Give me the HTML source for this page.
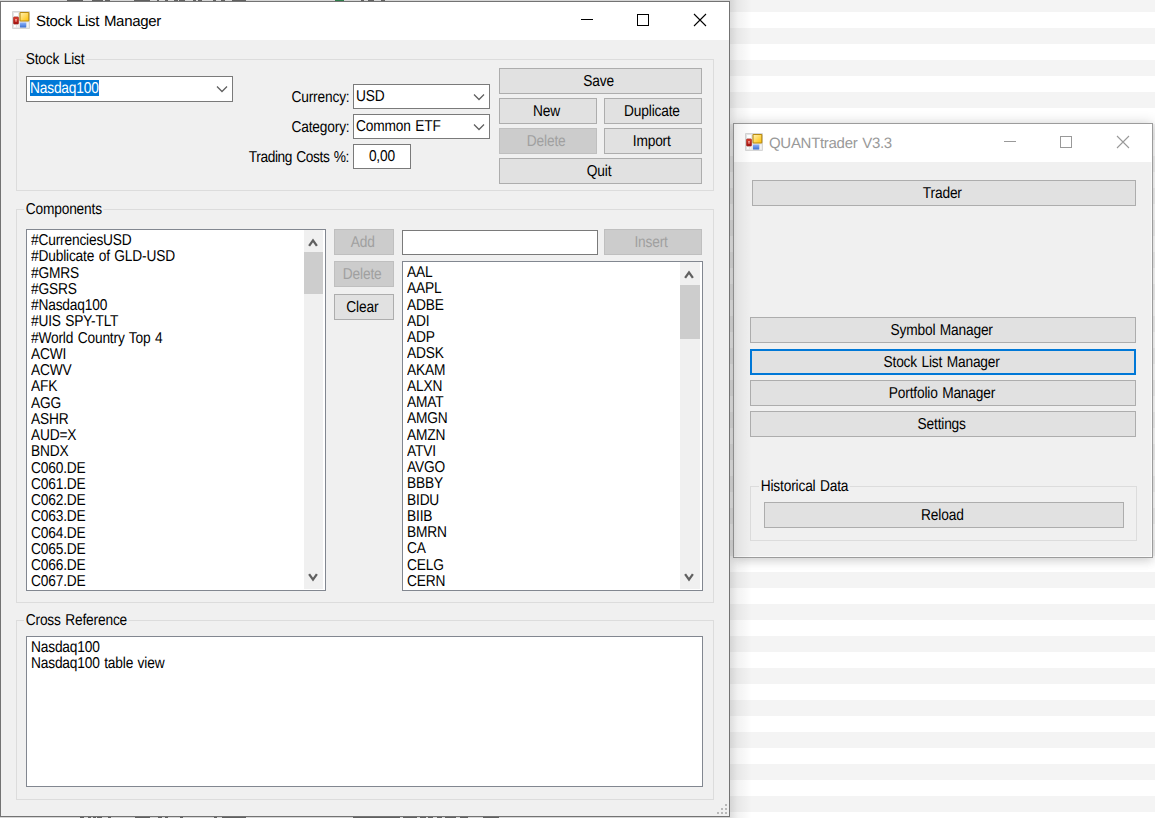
<!DOCTYPE html>
<html><head><meta charset="utf-8">
<style>
html,body{margin:0;padding:0;}
body{width:1155px;height:818px;position:relative;overflow:hidden;
 background:repeating-linear-gradient(to bottom,#f4f4f4 0px,#f4f4f4 12px,#ffffff 12px,#ffffff 28px,#f4f4f4 28px,#f4f4f4 32px);
 font-family:"Liberation Sans",sans-serif;font-size:15.75px;letter-spacing:-0.2px;word-spacing:1px;color:#000;text-rendering:geometricPrecision;}
.a{position:absolute;box-sizing:border-box;}
.t{position:absolute;white-space:pre;line-height:16px;}
.s{display:inline-block;transform:scaleX(0.872);position:relative;top:1px;}
.btn{position:absolute;box-sizing:border-box;background:#e1e1e1;border:1px solid #adadad;text-align:center;line-height:24px;white-space:pre;padding-right:3px;}
.btn .s{transform-origin:50% 50%;}
.dis{background:#cccccc;border-color:#bfbfbf;color:#a0a0a0;}
.foc{border:2px solid #0078d7;line-height:22px;}
.grp{position:absolute;box-sizing:border-box;border:1px solid #dcdcdc;}
.lbl{background:#f0f0f0;padding:0 2px 0 2px;}
.box{position:absolute;box-sizing:border-box;background:#fff;border:1px solid #7a7a7a;}
.lb{position:absolute;box-sizing:border-box;background:#fff;border:1px solid #828790;overflow:hidden;}
.sb{position:absolute;background:#f0f0f0;}
.thumb{position:absolute;background:#cdcdcd;}
</style></head><body>
<div class="a" style="left:733px;top:123px;width:420px;height:435px;border:1px solid #9c9c9c;background:#f0f0f0;box-shadow:0 0 12px rgba(0,0,0,0.16),0 4px 9px rgba(0,0,0,0.08),inset -1px -1px 0 #fafafa;"></div>
<div class="a" style="left:734px;top:124px;width:418px;height:38px;background:#fff;"></div>
<svg class="a" style="left:745px;top:133px" width="18" height="18" viewBox="0 0 18 18">
<defs><linearGradient id="gyq" x1="0" y1="0" x2="1" y2="1"><stop offset="0" stop-color="#fff2b8"/><stop offset="1" stop-color="#ffc000"/></linearGradient>
<linearGradient id="grq" x1="0" y1="0" x2="0" y2="1"><stop offset="0" stop-color="#e04030"/><stop offset="1" stop-color="#a01010"/></linearGradient>
<linearGradient id="gbq" x1="0" y1="0" x2="0" y2="1"><stop offset="0" stop-color="#8fb4ff"/><stop offset="1" stop-color="#3a6fd0"/></linearGradient></defs>
<rect x="0" y="0" width="18" height="18" rx="1" fill="#d6d6d6"/>
<rect x="1" y="1" width="16" height="16" fill="#e6e6e6"/>
<rect x="2" y="2" width="4" height="3" fill="#fff"/>
<rect x="1.5" y="6" width="5" height="7" rx="0.8" fill="url(#grq)" stroke="#a52015" stroke-width="0.6"/>
<path d="M3 8 L5 8 L4.3 11 L3.7 11 Z" fill="#f2a8a0"/>
<rect x="8" y="1.5" width="8.8" height="8.5" rx="0.6" fill="url(#gyq)" stroke="#b88a10" stroke-width="1.1"/>
<rect x="8" y="11.5" width="6.2" height="5" rx="0.5" fill="url(#gbq)"/>
<rect x="2" y="14" width="1.8" height="2.2" fill="#fff"/><rect x="5" y="14" width="1.4" height="2.2" fill="#f6f6f6"/><rect x="15" y="11.5" width="1.5" height="4.8" fill="#f4f4f4"/>
</svg>
<div class="a" style="left:769px;top:133.5px;font-size:15px;letter-spacing:-0.3px;line-height:20px;color:#999;white-space:pre">QUANTtrader V3.3</div>
<div class="a" style="left:1004px;top:141px;width:12px;height:1px;background:#999"></div>
<div class="a" style="left:1060px;top:136px;width:12px;height:12px;border:1px solid #999"></div>
<svg class="a" style="left:1116px;top:135px" width="14" height="14" viewBox="0 0 14 14"><path d="M1 1 L13 13 M13 1 L1 13" stroke="#999" stroke-width="1.1"/></svg>
<div class="btn " style="left:752px;top:180px;width:384px;height:26px;"><span class="s">Trader</span></div>
<div class="btn " style="left:750px;top:317px;width:386px;height:26px;"><span class="s">Symbol Manager</span></div>
<div class="btn foc" style="left:750px;top:349px;width:386px;height:26px;"><span class="s">Stock List Manager</span></div>
<div class="btn " style="left:750px;top:380px;width:386px;height:26px;"><span class="s">Portfolio Manager</span></div>
<div class="btn " style="left:750px;top:411px;width:386px;height:26px;"><span class="s">Settings</span></div>
<div class="grp" style="left:750px;top:486px;width:387px;height:55px;"></div>
<div class="t" style="left:759px;top:478px;"><span class="s lbl" style="transform-origin:0 0">Historical Data</span></div>
<div class="btn " style="left:764px;top:502px;width:360px;height:26px;"><span class="s">Reload</span></div>
<div class="a" style="left:730px;top:0;width:22px;height:818px;background:linear-gradient(to right,rgba(0,0,0,0.13),rgba(0,0,0,0.05) 35%,rgba(0,0,0,0) 100%);"></div>
<div class="a" style="left:0;top:1px;width:730px;height:816px;border:1px solid #737373;background:#f0f0f0;"></div>
<div class="a" style="left:1px;top:2px;width:728px;height:38px;background:#fff;"></div>
<svg class="a" style="left:12px;top:11px" width="18" height="18" viewBox="0 0 18 18">
<defs><linearGradient id="gym" x1="0" y1="0" x2="1" y2="1"><stop offset="0" stop-color="#fff2b8"/><stop offset="1" stop-color="#ffc000"/></linearGradient>
<linearGradient id="grm" x1="0" y1="0" x2="0" y2="1"><stop offset="0" stop-color="#e04030"/><stop offset="1" stop-color="#a01010"/></linearGradient>
<linearGradient id="gbm" x1="0" y1="0" x2="0" y2="1"><stop offset="0" stop-color="#8fb4ff"/><stop offset="1" stop-color="#3a6fd0"/></linearGradient></defs>
<rect x="0" y="0" width="18" height="18" rx="1" fill="#d6d6d6"/>
<rect x="1" y="1" width="16" height="16" fill="#e6e6e6"/>
<rect x="2" y="2" width="4" height="3" fill="#fff"/>
<rect x="1.5" y="6" width="5" height="7" rx="0.8" fill="url(#grm)" stroke="#a52015" stroke-width="0.6"/>
<path d="M3 8 L5 8 L4.3 11 L3.7 11 Z" fill="#f2a8a0"/>
<rect x="8" y="1.5" width="8.8" height="8.5" rx="0.6" fill="url(#gym)" stroke="#b88a10" stroke-width="1.1"/>
<rect x="8" y="11.5" width="6.2" height="5" rx="0.5" fill="url(#gbm)"/>
<rect x="2" y="14" width="1.8" height="2.2" fill="#fff"/><rect x="5" y="14" width="1.4" height="2.2" fill="#f6f6f6"/><rect x="15" y="11.5" width="1.5" height="4.8" fill="#f4f4f4"/>
</svg>
<div class="a" style="left:36px;top:12px;font-size:15px;letter-spacing:-0.3px;line-height:20px;white-space:pre">Stock List Manager</div>
<div class="a" style="left:581px;top:19px;width:12px;height:1px;background:#000"></div>
<div class="a" style="left:637px;top:14px;width:12px;height:12px;border:1px solid #000"></div>
<svg class="a" style="left:693px;top:13px" width="14" height="14" viewBox="0 0 14 14"><path d="M1 1 L13 13 M13 1 L1 13" stroke="#000" stroke-width="1.1"/></svg>
<div class="grp" style="left:16px;top:59px;width:698px;height:132px;"></div>
<div class="t" style="left:24px;top:51px;"><span class="s lbl" style="transform-origin:0 0">Stock List</span></div>
<div class="box" style="left:26px;top:76px;width:207px;height:26px;"></div>
<div class="a" style="left:30px;top:80px;width:69px;height:16px;background:#0078d7;"></div>
<div class="t" style="left:30px;top:80px;text-align:left;color:#fff"><span class="s" style="transform-origin:0 0">Nasdaq100</span></div>
<svg class="a" style="left:216px;top:85px" width="12" height="8" viewBox="0 0 12 8"><path d="M1 1.5 L6 6.5 L11 1.5" fill="none" stroke="#606060" stroke-width="1.3"/></svg>
<div class="t" style="left:200px;top:89px;width:149px;text-align:right;"><span class="s" style="transform-origin:100% 0">Currency:</span></div>
<div class="t" style="left:200px;top:119px;width:149px;text-align:right;"><span class="s" style="transform-origin:100% 0">Category:</span></div>
<div class="t" style="left:200px;top:149px;width:149px;text-align:right;letter-spacing:-0.45px"><span class="s" style="transform-origin:100% 0">Trading Costs %:</span></div>
<div class="box" style="left:353px;top:84px;width:137px;height:25px;"></div>
<div class="t" style="left:356px;top:88px;text-align:left;"><span class="s" style="transform-origin:0 0">USD</span></div>
<svg class="a" style="left:473px;top:93px" width="12" height="8" viewBox="0 0 12 8"><path d="M1 1.5 L6 6.5 L11 1.5" fill="none" stroke="#606060" stroke-width="1.3"/></svg>
<div class="box" style="left:353px;top:114px;width:137px;height:25px;"></div>
<div class="t" style="left:356px;top:118px;text-align:left;"><span class="s" style="transform-origin:0 0">Common ETF</span></div>
<svg class="a" style="left:473px;top:123px" width="12" height="8" viewBox="0 0 12 8"><path d="M1 1.5 L6 6.5 L11 1.5" fill="none" stroke="#606060" stroke-width="1.3"/></svg>
<div class="box" style="left:353px;top:144px;width:58px;height:25px;"></div>
<div class="t" style="left:354px;top:148px;width:56px;text-align:center;"><span class="s" style="transform-origin:50% 0">0,00</span></div>
<div class="btn " style="left:499px;top:68px;width:203px;height:26px;"><span class="s">Save</span></div>
<div class="btn " style="left:499px;top:98px;width:98px;height:26px;"><span class="s">New</span></div>
<div class="btn " style="left:604px;top:98px;width:98px;height:26px;"><span class="s">Duplicate</span></div>
<div class="btn dis" style="left:499px;top:128px;width:98px;height:26px;"><span class="s">Delete</span></div>
<div class="btn " style="left:604px;top:128px;width:98px;height:26px;"><span class="s">Import</span></div>
<div class="btn " style="left:499px;top:158px;width:203px;height:26px;"><span class="s">Quit</span></div>
<div class="grp" style="left:16px;top:209px;width:698px;height:394px;"></div>
<div class="t" style="left:24px;top:201px;"><span class="s lbl" style="transform-origin:0 0">Components</span></div>
<div class="lb" style="left:26px;top:229px;width:300px;height:362px;"><div class="t" style="left:4px;top:2.0px;text-align:left;"><span class="s" style="transform-origin:0 0">#CurrenciesUSD</span></div><div class="t" style="left:4px;top:18.25px;text-align:left;"><span class="s" style="transform-origin:0 0">#Dublicate of GLD-USD</span></div><div class="t" style="left:4px;top:34.5px;text-align:left;"><span class="s" style="transform-origin:0 0">#GMRS</span></div><div class="t" style="left:4px;top:50.75px;text-align:left;"><span class="s" style="transform-origin:0 0">#GSRS</span></div><div class="t" style="left:4px;top:67.0px;text-align:left;"><span class="s" style="transform-origin:0 0">#Nasdaq100</span></div><div class="t" style="left:4px;top:83.25px;text-align:left;"><span class="s" style="transform-origin:0 0">#UIS SPY-TLT</span></div><div class="t" style="left:4px;top:99.5px;text-align:left;"><span class="s" style="transform-origin:0 0">#World Country Top 4</span></div><div class="t" style="left:4px;top:115.75px;text-align:left;"><span class="s" style="transform-origin:0 0">ACWI</span></div><div class="t" style="left:4px;top:132.0px;text-align:left;"><span class="s" style="transform-origin:0 0">ACWV</span></div><div class="t" style="left:4px;top:148.25px;text-align:left;"><span class="s" style="transform-origin:0 0">AFK</span></div><div class="t" style="left:4px;top:164.5px;text-align:left;"><span class="s" style="transform-origin:0 0">AGG</span></div><div class="t" style="left:4px;top:180.75px;text-align:left;"><span class="s" style="transform-origin:0 0">ASHR</span></div><div class="t" style="left:4px;top:197.0px;text-align:left;"><span class="s" style="transform-origin:0 0">AUD=X</span></div><div class="t" style="left:4px;top:213.25px;text-align:left;"><span class="s" style="transform-origin:0 0">BNDX</span></div><div class="t" style="left:4px;top:229.5px;text-align:left;"><span class="s" style="transform-origin:0 0">C060.DE</span></div><div class="t" style="left:4px;top:245.75px;text-align:left;"><span class="s" style="transform-origin:0 0">C061.DE</span></div><div class="t" style="left:4px;top:262.0px;text-align:left;"><span class="s" style="transform-origin:0 0">C062.DE</span></div><div class="t" style="left:4px;top:278.25px;text-align:left;"><span class="s" style="transform-origin:0 0">C063.DE</span></div><div class="t" style="left:4px;top:294.5px;text-align:left;"><span class="s" style="transform-origin:0 0">C064.DE</span></div><div class="t" style="left:4px;top:310.75px;text-align:left;"><span class="s" style="transform-origin:0 0">C065.DE</span></div><div class="t" style="left:4px;top:327.0px;text-align:left;"><span class="s" style="transform-origin:0 0">C066.DE</span></div><div class="t" style="left:4px;top:343.25px;text-align:left;"><span class="s" style="transform-origin:0 0">C067.DE</span></div><div class="sb" style="left:277px;top:0px;width:19px;height:359px;"></div><div class="thumb" style="left:277px;top:22px;width:19px;height:42px;"></div><svg class="a" style="left:281px;top:6px" width="10" height="11" viewBox="0 0 10 11"><path d="M1.1 9.8 L5 4.4 L8.9 9.8" fill="none" stroke="#606060" stroke-width="2.3"/></svg><svg class="a" style="left:281px;top:342.5px" width="10" height="11" viewBox="0 0 10 11"><path d="M1.1 1.2 L5 6.6 L8.9 1.2" fill="none" stroke="#606060" stroke-width="2.3"/></svg></div>
<div class="btn dis" style="left:334px;top:229px;width:60px;height:26px;"><span class="s">Add</span></div>
<div class="btn dis" style="left:334px;top:261px;width:60px;height:26px;"><span class="s">Delete</span></div>
<div class="btn " style="left:334px;top:294px;width:60px;height:26px;"><span class="s">Clear</span></div>
<div class="box" style="left:402px;top:230px;width:196px;height:25px;"></div>
<div class="btn dis" style="left:604px;top:229px;width:98px;height:26px;"><span class="s">Insert</span></div>
<div class="lb" style="left:402px;top:261px;width:301px;height:330px;"><div class="t" style="left:4px;top:2.0px;text-align:left;"><span class="s" style="transform-origin:0 0">AAL</span></div><div class="t" style="left:4px;top:18.25px;text-align:left;"><span class="s" style="transform-origin:0 0">AAPL</span></div><div class="t" style="left:4px;top:34.5px;text-align:left;"><span class="s" style="transform-origin:0 0">ADBE</span></div><div class="t" style="left:4px;top:50.75px;text-align:left;"><span class="s" style="transform-origin:0 0">ADI</span></div><div class="t" style="left:4px;top:67.0px;text-align:left;"><span class="s" style="transform-origin:0 0">ADP</span></div><div class="t" style="left:4px;top:83.25px;text-align:left;"><span class="s" style="transform-origin:0 0">ADSK</span></div><div class="t" style="left:4px;top:99.5px;text-align:left;"><span class="s" style="transform-origin:0 0">AKAM</span></div><div class="t" style="left:4px;top:115.75px;text-align:left;"><span class="s" style="transform-origin:0 0">ALXN</span></div><div class="t" style="left:4px;top:132.0px;text-align:left;"><span class="s" style="transform-origin:0 0">AMAT</span></div><div class="t" style="left:4px;top:148.25px;text-align:left;"><span class="s" style="transform-origin:0 0">AMGN</span></div><div class="t" style="left:4px;top:164.5px;text-align:left;"><span class="s" style="transform-origin:0 0">AMZN</span></div><div class="t" style="left:4px;top:180.75px;text-align:left;"><span class="s" style="transform-origin:0 0">ATVI</span></div><div class="t" style="left:4px;top:197.0px;text-align:left;"><span class="s" style="transform-origin:0 0">AVGO</span></div><div class="t" style="left:4px;top:213.25px;text-align:left;"><span class="s" style="transform-origin:0 0">BBBY</span></div><div class="t" style="left:4px;top:229.5px;text-align:left;"><span class="s" style="transform-origin:0 0">BIDU</span></div><div class="t" style="left:4px;top:245.75px;text-align:left;"><span class="s" style="transform-origin:0 0">BIIB</span></div><div class="t" style="left:4px;top:262.0px;text-align:left;"><span class="s" style="transform-origin:0 0">BMRN</span></div><div class="t" style="left:4px;top:278.25px;text-align:left;"><span class="s" style="transform-origin:0 0">CA</span></div><div class="t" style="left:4px;top:294.5px;text-align:left;"><span class="s" style="transform-origin:0 0">CELG</span></div><div class="t" style="left:4px;top:310.75px;text-align:left;"><span class="s" style="transform-origin:0 0">CERN</span></div><div class="sb" style="left:277px;top:0px;width:20px;height:327px;"></div><div class="thumb" style="left:277px;top:23px;width:20px;height:54px;"></div><svg class="a" style="left:281px;top:6px" width="10" height="11" viewBox="0 0 10 11"><path d="M1.1 9.8 L5 4.4 L8.9 9.8" fill="none" stroke="#606060" stroke-width="2.3"/></svg><svg class="a" style="left:281px;top:311px" width="10" height="11" viewBox="0 0 10 11"><path d="M1.1 1.2 L5 6.6 L8.9 1.2" fill="none" stroke="#606060" stroke-width="2.3"/></svg></div>
<div class="grp" style="left:16px;top:620px;width:698px;height:180px;"></div>
<div class="t" style="left:24px;top:612px;"><span class="s lbl" style="transform-origin:0 0">Cross Reference</span></div>
<div class="lb" style="left:26px;top:636px;width:677px;height:151px;"><div class="t" style="left:4px;top:2px;text-align:left;"><span class="s" style="transform-origin:0 0">Nasdaq100</span></div><div class="t" style="left:4px;top:18px;text-align:left;"><span class="s" style="transform-origin:0 0">Nasdaq100 table view</span></div></div>
<div class="a" style="left:725px;top:804px;width:2px;height:2px;background:#b8b8b8"></div>
<div class="a" style="left:721px;top:808px;width:2px;height:2px;background:#b8b8b8"></div>
<div class="a" style="left:725px;top:808px;width:2px;height:2px;background:#b8b8b8"></div>
<div class="a" style="left:717px;top:812px;width:2px;height:2px;background:#b8b8b8"></div>
<div class="a" style="left:721px;top:812px;width:2px;height:2px;background:#b8b8b8"></div>
<div class="a" style="left:725px;top:812px;width:2px;height:2px;background:#b8b8b8"></div>
<div class="a" style="left:0;top:0;width:730px;height:1px;background:#d6d6d6"></div>
<div class="a" style="left:67px;top:0;width:16px;height:1px;background:rgba(0,0,0,0.55)"></div>
<div class="a" style="left:92px;top:0;width:11px;height:1px;background:rgba(0,0,0,0.55)"></div>
<div class="a" style="left:105px;top:0;width:5px;height:1px;background:rgba(0,0,0,0.55)"></div>
<div class="a" style="left:134px;top:0;width:16px;height:1px;background:rgba(0,0,0,0.55)"></div>
<div class="a" style="left:157px;top:0;width:2px;height:1px;background:rgba(0,0,0,0.55)"></div>
<div class="a" style="left:165px;top:0;width:3px;height:1px;background:rgba(0,0,0,0.55)"></div>
<div class="a" style="left:174px;top:0;width:4px;height:1px;background:rgba(0,0,0,0.55)"></div>
<div class="a" style="left:179px;top:0;width:6px;height:1px;background:rgba(0,0,0,0.55)"></div>
<div class="a" style="left:193px;top:0;width:3px;height:1px;background:rgba(0,0,0,0.55)"></div>
<div class="a" style="left:198px;top:0;width:4px;height:1px;background:rgba(0,0,0,0.55)"></div>
<div class="a" style="left:213px;top:0;width:3px;height:1px;background:rgba(0,0,0,0.55)"></div>
<div class="a" style="left:221px;top:0;width:4px;height:1px;background:rgba(0,0,0,0.55)"></div>
<div class="a" style="left:232px;top:0;width:14px;height:1px;background:rgba(0,0,0,0.55)"></div>
<div class="a" style="left:361px;top:0;width:3px;height:1px;background:rgba(0,0,0,0.55)"></div>
<div class="a" style="left:368px;top:0;width:6px;height:1px;background:rgba(0,0,0,0.55)"></div>
<div class="a" style="left:381px;top:0;width:4px;height:1px;background:rgba(0,0,0,0.55)"></div>
<div class="a" style="left:335px;top:0;width:9px;height:1px;background:#2e7d4a"></div>
<div class="a" style="left:0;top:817px;width:730px;height:1px;background:#d6d6d6"></div>
<div class="a" style="left:80px;top:817px;width:4px;height:1px;background:rgba(0,0,0,0.55)"></div>
<div class="a" style="left:88px;top:817px;width:3px;height:1px;background:rgba(0,0,0,0.55)"></div>
<div class="a" style="left:93px;top:817px;width:3px;height:1px;background:rgba(0,0,0,0.55)"></div>
<div class="a" style="left:97px;top:817px;width:5px;height:1px;background:rgba(0,0,0,0.55)"></div>
<div class="a" style="left:108px;top:817px;width:3px;height:1px;background:rgba(0,0,0,0.55)"></div>
<div class="a" style="left:135px;top:817px;width:15px;height:1px;background:rgba(0,0,0,0.55)"></div>
<div class="a" style="left:158px;top:817px;width:4px;height:1px;background:rgba(0,0,0,0.55)"></div>
<div class="a" style="left:165px;top:817px;width:3px;height:1px;background:rgba(0,0,0,0.55)"></div>
<div class="a" style="left:180px;top:817px;width:3px;height:1px;background:rgba(0,0,0,0.55)"></div>
<div class="a" style="left:214px;top:817px;width:3px;height:1px;background:rgba(0,0,0,0.55)"></div>
<div class="a" style="left:222px;top:817px;width:24px;height:1px;background:rgba(0,0,0,0.55)"></div>
<div class="a" style="left:353px;top:817px;width:47px;height:1px;background:rgba(0,0,0,0.55)"></div>
<div class="a" style="left:403px;top:817px;width:14px;height:1px;background:rgba(0,0,0,0.55)"></div>
<div class="a" style="left:420px;top:817px;width:6px;height:1px;background:rgba(0,0,0,0.55)"></div>
<div class="a" style="left:428px;top:817px;width:5px;height:1px;background:rgba(0,0,0,0.55)"></div>
<div class="a" style="left:437px;top:817px;width:5px;height:1px;background:rgba(0,0,0,0.55)"></div>
<div class="a" style="left:445px;top:817px;width:11px;height:1px;background:rgba(0,0,0,0.55)"></div>
<div class="a" style="left:460px;top:817px;width:8px;height:1px;background:rgba(0,0,0,0.55)"></div>
<div class="a" style="left:483px;top:817px;width:16px;height:1px;background:rgba(0,0,0,0.55)"></div>
</body></html>
